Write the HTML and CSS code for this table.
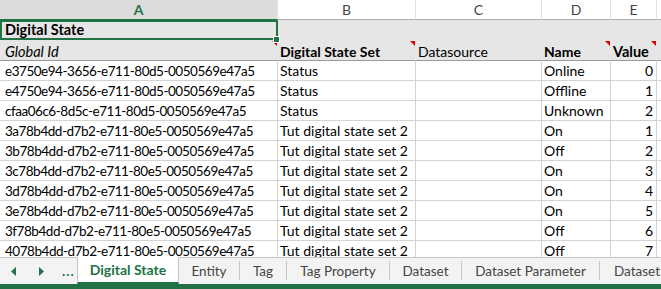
FILE: index.html
```html
<!DOCTYPE html>
<html lang="en">
<head>
    <meta charset="UTF-8">
    <title>Digital State</title>
    <link rel="stylesheet" href="styles.css">
</head>
<body>
    <div class="sheet">
        <div class="row col-heads">
            <div class="cell c-a active">A</div>
            <div class="cell c-b">B</div>
            <div class="cell c-c">C</div>
            <div class="cell c-d">D</div>
            <div class="cell c-e">E</div>
            <div class="cell c-f"></div>
        </div>

        <div class="row title-row">
            <div class="cell c-a bold selected">Digital State</div>
            <div class="cell c-b"></div>
            <div class="cell c-c"></div>
            <div class="cell c-d"></div>
            <div class="cell c-e"></div>
            <div class="cell c-f"></div>
        </div>

        <div class="row head-row">
            <div class="cell c-a italic note">Global Id</div>
            <div class="cell c-b bold note">Digital State Set</div>
            <div class="cell c-c">Datasource</div>
            <div class="cell c-d bold note">Name</div>
            <div class="cell c-e bold note">Value</div>
            <div class="cell c-f"></div>
        </div>

        <div class="row">
            <div class="cell c-a">e3750e94-3656-e711-80d5-0050569e47a5</div>
            <div class="cell c-b">Status</div>
            <div class="cell c-c"></div>
            <div class="cell c-d">Online</div>
            <div class="cell c-e num">0</div>
            <div class="cell c-f"></div>
        </div>
        <div class="row">
            <div class="cell c-a">e4750e94-3656-e711-80d5-0050569e47a5</div>
            <div class="cell c-b">Status</div>
            <div class="cell c-c"></div>
            <div class="cell c-d">Offline</div>
            <div class="cell c-e num">1</div>
            <div class="cell c-f"></div>
        </div>
        <div class="row">
            <div class="cell c-a">cfaa06c6-8d5c-e711-80d5-0050569e47a5</div>
            <div class="cell c-b">Status</div>
            <div class="cell c-c"></div>
            <div class="cell c-d">Unknown</div>
            <div class="cell c-e num">2</div>
            <div class="cell c-f"></div>
        </div>
        <div class="row">
            <div class="cell c-a">3a78b4dd-d7b2-e711-80e5-0050569e47a5</div>
            <div class="cell c-b">Tut digital state set 2</div>
            <div class="cell c-c"></div>
            <div class="cell c-d">On</div>
            <div class="cell c-e num">1</div>
            <div class="cell c-f"></div>
        </div>
        <div class="row">
            <div class="cell c-a">3b78b4dd-d7b2-e711-80e5-0050569e47a5</div>
            <div class="cell c-b">Tut digital state set 2</div>
            <div class="cell c-c"></div>
            <div class="cell c-d">Off</div>
            <div class="cell c-e num">2</div>
            <div class="cell c-f"></div>
        </div>
        <div class="row">
            <div class="cell c-a">3c78b4dd-d7b2-e711-80e5-0050569e47a5</div>
            <div class="cell c-b">Tut digital state set 2</div>
            <div class="cell c-c"></div>
            <div class="cell c-d">On</div>
            <div class="cell c-e num">3</div>
            <div class="cell c-f"></div>
        </div>
        <div class="row">
            <div class="cell c-a">3d78b4dd-d7b2-e711-80e5-0050569e47a5</div>
            <div class="cell c-b">Tut digital state set 2</div>
            <div class="cell c-c"></div>
            <div class="cell c-d">On</div>
            <div class="cell c-e num">4</div>
            <div class="cell c-f"></div>
        </div>
        <div class="row">
            <div class="cell c-a">3e78b4dd-d7b2-e711-80e5-0050569e47a5</div>
            <div class="cell c-b">Tut digital state set 2</div>
            <div class="cell c-c"></div>
            <div class="cell c-d">On</div>
            <div class="cell c-e num">5</div>
            <div class="cell c-f"></div>
        </div>
        <div class="row">
            <div class="cell c-a">3f78b4dd-d7b2-e711-80e5-0050569e47a5</div>
            <div class="cell c-b">Tut digital state set 2</div>
            <div class="cell c-c"></div>
            <div class="cell c-d">Off</div>
            <div class="cell c-e num">6</div>
            <div class="cell c-f"></div>
        </div>
        <div class="row">
            <div class="cell c-a">4078b4dd-d7b2-e711-80e5-0050569e47a5</div>
            <div class="cell c-b">Tut digital state set 2</div>
            <div class="cell c-c"></div>
            <div class="cell c-d">Off</div>
            <div class="cell c-e num">7</div>
            <div class="cell c-f"></div>
        </div>
    </div>

    <div class="tabbar">
        <div class="tab-nav">
            <span class="nav-btn">
                <svg width="6" height="9" viewBox="0 0 6 9"><path d="M5 0 L0 4.5 L5 9 Z" fill="#217346"/></svg>
            </span>
            <span class="nav-btn">
                <svg width="6" height="9" viewBox="0 0 6 9"><path d="M1 0 L6 4.5 L1 9 Z" fill="#217346"/></svg>
            </span>
            <span class="nav-more">...</span>
        </div>
        <div class="tab current">Digital State</div>
        <div class="tab t-entity">Entity</div>
        <div class="tab t-tag">Tag</div>
        <div class="tab t-prop">Tag Property</div>
        <div class="tab t-set">Dataset</div>
        <div class="tab t-param">Dataset Parameter</div>
        <div class="tab last">Dataset</div>
    </div>
    <div class="statusbar"></div>
</body>
</html>
```

FILE: styles.css
```css
/* Лист в стиле Excel */
body {
    margin: 0;
    width: 661px;
    height: 289px;
    overflow: hidden;
    background-color: #ffffff;
    font-family: Lato, "Open Sans", sans-serif;
    font-size: 14px;
    color: #000000;
}

.sheet {
    height: 257px;
    overflow: hidden;
}

.row {
    display: flex;
    height: 20px;
}

.cell {
    box-sizing: border-box;
    height: 100%;
    flex: none;
    position: relative;
    padding: 0 4px 0 2px;
    line-height: 20px;
    white-space: nowrap;
    overflow: visible;
    border-right: 1px solid #d4d4d4;
    border-bottom: 1px solid #d4d4d4;
}

.c-a {
    width: 278px;
    padding-left: 5px;
    font-size: 13.5px;
    letter-spacing: -0.47px;
}
.c-b { width: 138px; }
.c-c { width: 126px; }
.c-d { width: 69px; }
.c-e { width: 46px; }
.c-f { flex: 1; border-right: none; }

/* Заголовки столбцов */
.col-heads .cell {
    padding: 0;
    text-align: center;
    color: #444444;
    font-size: 14px;
    background-color: #ffffff;
    border-right-color: #e1e1e1;
    border-bottom-color: #ababab;
    letter-spacing: 0;
}

.col-heads .cell.active {
    background-color: #dcdcdc;
    color: #217346;
    font-weight: bold;
    border-bottom: 1px solid #217346;
}

/* Строки с заливкой */
.title-row,
.head-row {
    background-color: #e7e6e6;
}

.title-row {
    height: 21px;
}

.title-row .cell,
.head-row .cell {
    border-right-color: transparent;
    border-bottom-color: transparent;
}

.title-row .c-a,
.head-row .c-a {
    font-size: 14.5px;
    letter-spacing: 0;
}

.head-row .cell {
    line-height: 22px;
    border-bottom: 1px solid #9b9b9b;
}

.head-row .c-e {
    padding-left: 2px;
    font-size: 14.5px;
}

.bold {
    font-weight: bold;
}

.italic {
    font-style: italic;
}

.num {
    text-align: right;
    padding-right: 3px;
}

/* Выделенная ячейка */
.selected::after {
    content: "";
    position: absolute;
    left: 0;
    top: 0;
    right: -1px;
    bottom: 0;
    border: 2px solid #217346;
}

.selected::before {
    content: "";
    position: absolute;
    right: -3px;
    bottom: -3px;
    width: 5px;
    height: 5px;
    background-color: #217346;
    border: 1px solid #ffffff;
    z-index: 2;
}

/* Красный уголок примечания */
.note::after {
    content: "";
    position: absolute;
    top: 0;
    right: 0;
    border-top: 5px solid #e00000;
    border-left: 5px solid transparent;
}

/* Ярлыки листов */
.tabbar {
    display: flex;
    align-items: stretch;
    height: 27px;
    box-sizing: border-box;
    border-top: 1px solid #c6c6c6;
    background-color: #f3f3f3;
    font-size: 13.5px;
    color: #444444;
    white-space: nowrap;
}

.tab-nav {
    display: flex;
    align-items: center;
    width: 77px;
    flex: none;
}

.nav-btn {
    width: 27px;
    display: flex;
    justify-content: center;
}

.nav-more {
    color: #217346;
    font-weight: bold;
    padding-left: 8px;
    letter-spacing: 1px;
}

.tab {
    display: flex;
    flex: none;
    align-items: center;
    justify-content: center;
    box-sizing: border-box;
    margin: 3px 0 4px;
    border-right: 1px solid #c6c6c6;
}

.tab.current {
    margin: -1px 0 0;
    width: 102px;
    background-color: #ffffff;
    color: #217346;
    font-weight: bold;
    font-size: 14px;
    border-left: 1px solid #c6c6c6;
    border-right: 1px solid #c6c6c6;
    border-bottom: 2px solid #217346;
}

.t-entity { width: 61px; }
.t-tag { width: 47px; }
.t-prop { width: 103px; }
.t-set { width: 72px; }
.t-param { width: 138px; }

.tab.last {
    border-right: none;
    justify-content: flex-start;
    padding-left: 14px;
}

.statusbar {
    height: 6px;
    background-color: #217346;
}
```
